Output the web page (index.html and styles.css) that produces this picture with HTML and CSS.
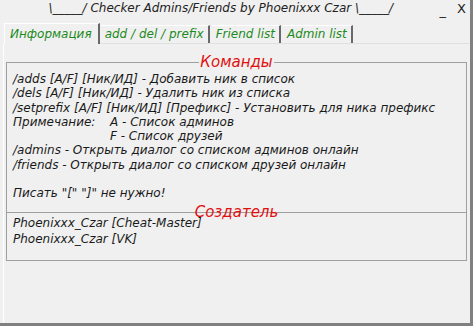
FILE: index.html
```html
<!DOCTYPE html>
<html lang="ru">

<head>
    <meta charset="UTF-8">
    <meta name="viewport" content="width=device-width, initial-scale=1.0">
    <title>Checker Admins/Friends</title>
    <link rel="stylesheet" href="styles.css">
</head>

<body>
    <div class="window">
        <div class="titlebar">
            <span class="title">\_____/ Checker Admins/Friends by Phoenixxx Czar \_____/</span>
            <span class="controls">
                <span class="min">_</span>
                <span class="close">X</span>
            </span>
        </div>

        <div class="tabs">
            <div class="tab active">Информация</div>
            <div class="tab">add / del / prefix</div>
            <div class="tab">Friend list</div>
            <div class="tab">Admin list</div>
        </div>

        <div class="panel">
            <fieldset class="group">
                <legend>Команды</legend>
                <p>/adds [A/F] [Ник/ИД] - Добавить ник в список</p>
                <p>/dels [A/F] [Ник/ИД] - Удалить ник из списка</p>
                <p>/setprefix [A/F] [Ник/ИД] [Префикс] - Установить для ника префикс</p>
                <p><span class="note">Примечание:</span>A - Список админов</p>
                <p><span class="note"></span>F - Список друзей</p>
                <p>/admins - Открыть диалог со списком админов онлайн</p>
                <p>/friends - Открыть диалог со списком друзей онлайн</p>
                <p>&nbsp;</p>
                <p>Писать "[" "]" не нужно!</p>
            </fieldset>
            <fieldset class="group second">
                <legend>Создатель</legend>
                <p>Phoenixxx_Czar [Cheat-Master]</p>
                <p>Phoenixxx_Czar [VK]</p>
            </fieldset>
        </div>
    </div>
</body>

</html>
```

FILE: styles.css
```css
* {
    margin: 0;
    padding: 0;
    box-sizing: border-box;
    font-family: "DejaVu Sans", Verdana, sans-serif;
}

body {
    background-color: #f0f0f0;
    width: 473px;
    height: 326px;
    overflow: hidden;
}

.window {
    width: 473px;
    height: 326px;
    background-color: #f0f0f0;
    border-right: 3px solid #808080;
    border-bottom: 3px solid #808080;
    display: flex;
    flex-direction: column;
}

.titlebar {
    height: 23px;
    display: flex;
    align-items: flex-start;
    padding-top: 1px;
}

.title {
    flex: 1;
    text-align: center;
    font-size: 12px;
    font-style: italic;
    color: #222;
    padding-left: 2px;
}

.controls {
    display: flex;
    gap: 11px;
    padding-right: 4px;
    font-size: 13px;
    color: #222;
}

.controls .min {
    padding-top: 2px;
}

.tabs {
    display: flex;
    height: 20px;
    padding-left: 4px;
    align-items: flex-end;
    position: relative;
    z-index: 1;
}

.tab {
    height: 18px;
    padding: 0 4px 0 4px;
    border-right: 2px solid #696969;
    border-top: 1px solid #fff;
    font-size: 12px;
    font-style: italic;
    color: #1c8a1c;
    line-height: 17px;
    margin-right: 2px;
}

.tab.active {
    height: 21px;
    line-height: 21px;
    margin-bottom: -1px;
    background-color: #f0f0f0;
    border-left: 1px solid #fff;
    padding: 0 6px 0 5px;
    margin-right: 1px;
}

.panel {
    flex: 1;
    border-top: 1px solid #e0e0e0;
    border-left: 1px solid #fff;
    margin-left: 3px;
    padding: 9px 3px 0 2px;
}

.group {
    border: 1px solid #a0a0a0;
    padding: 1px 6px 6px 6px;
    height: 160px;
}

.group legend {
    margin: 0 auto;
    padding: 0 1px;
    font-size: 15px;
    font-style: italic;
    color: #e01010;
    line-height: 18px;
}

.group.second {
    margin-top: -10px;
    height: 58px;
    padding-top: 0;
}

.group.second legend {
    margin-bottom: -5px;
}

.group p {
    font-size: 12px;
    font-style: italic;
    color: #1a1a1a;
    line-height: 14.3px;
    white-space: nowrap;
}

.group.second p {
    line-height: 15.5px;
}

.group .note {
    display: inline-block;
    width: 97px;
}
```
